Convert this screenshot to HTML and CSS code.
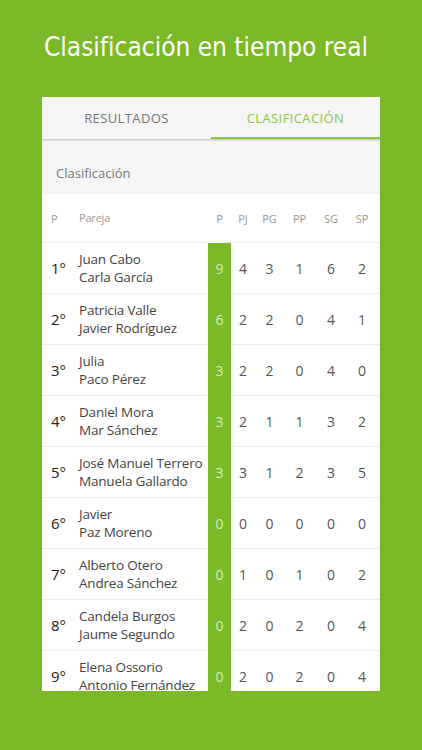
FILE: index.html
```html
<!DOCTYPE html>
<html lang="es">

<head>
    <meta charset="UTF-8">
    <meta name="viewport" content="width=device-width, initial-scale=1.0">
    <title>Clasificación en tiempo real</title>
    <link rel="stylesheet" href="styles.css">
</head>

<body>
    <header class="hero">
        <h1>Clasificación en tiempo real</h1>
    </header>

    <main class="card">
        <nav class="tabs">
            <div class="tab">RESULTADOS</div>
            <div class="tab active">CLASIFICACIÓN</div>
        </nav>

        <div class="section-title">Clasificación</div>

        <div class="table">
            <div class="row head">
                <span class="pos">P</span>
                <span class="name">Pareja</span>
                <span class="pts">P</span>
                <span class="num">PJ</span>
                <span class="num">PG</span>
                <span class="num">PP</span>
                <span class="num">SG</span>
                <span class="num">SP</span>
                <span></span>
            </div>
            <div class="row">
                <span class="pos">1°</span>
                <span class="name">Juan Cabo<br>Carla García</span>
                <span class="pts">9</span>
                <span class="num">4</span>
                <span class="num">3</span>
                <span class="num">1</span>
                <span class="num">6</span>
                <span class="num">2</span>
                <span></span>
            </div>
            <div class="row">
                <span class="pos">2°</span>
                <span class="name">Patricia Valle<br>Javier Rodríguez</span>
                <span class="pts">6</span>
                <span class="num">2</span>
                <span class="num">2</span>
                <span class="num">0</span>
                <span class="num">4</span>
                <span class="num">1</span>
                <span></span>
            </div>
            <div class="row">
                <span class="pos">3°</span>
                <span class="name">Julia<br>Paco Pérez</span>
                <span class="pts">3</span>
                <span class="num">2</span>
                <span class="num">2</span>
                <span class="num">0</span>
                <span class="num">4</span>
                <span class="num">0</span>
                <span></span>
            </div>
            <div class="row">
                <span class="pos">4°</span>
                <span class="name">Daniel Mora<br>Mar Sánchez</span>
                <span class="pts">3</span>
                <span class="num">2</span>
                <span class="num">1</span>
                <span class="num">1</span>
                <span class="num">3</span>
                <span class="num">2</span>
                <span></span>
            </div>
            <div class="row">
                <span class="pos">5°</span>
                <span class="name">José Manuel Terrero<br>Manuela Gallardo</span>
                <span class="pts">3</span>
                <span class="num">3</span>
                <span class="num">1</span>
                <span class="num">2</span>
                <span class="num">3</span>
                <span class="num">5</span>
                <span></span>
            </div>
            <div class="row">
                <span class="pos">6°</span>
                <span class="name">Javier<br>Paz Moreno</span>
                <span class="pts">0</span>
                <span class="num">0</span>
                <span class="num">0</span>
                <span class="num">0</span>
                <span class="num">0</span>
                <span class="num">0</span>
                <span></span>
            </div>
            <div class="row">
                <span class="pos">7°</span>
                <span class="name">Alberto Otero<br>Andrea Sánchez</span>
                <span class="pts">0</span>
                <span class="num">1</span>
                <span class="num">0</span>
                <span class="num">1</span>
                <span class="num">0</span>
                <span class="num">2</span>
                <span></span>
            </div>
            <div class="row">
                <span class="pos">8°</span>
                <span class="name">Candela Burgos<br>Jaume Segundo</span>
                <span class="pts">0</span>
                <span class="num">2</span>
                <span class="num">0</span>
                <span class="num">2</span>
                <span class="num">0</span>
                <span class="num">4</span>
                <span></span>
            </div>
            <div class="row">
                <span class="pos">9°</span>
                <span class="name">Elena Ossorio<br>Antonio Fernández</span>
                <span class="pts">0</span>
                <span class="num">2</span>
                <span class="num">0</span>
                <span class="num">2</span>
                <span class="num">0</span>
                <span class="num">4</span>
                <span></span>
            </div>
        </div>
    </main>
</body>

</html>
```

FILE: styles.css
```css
/* General styling */
* {
    margin: 0;
    padding: 0;
    box-sizing: border-box;
}

body {
    height: 750px;
    overflow: hidden;
    background-color: #7bb929;
    font-family: "Open Sans", "Noto Sans", sans-serif;
}

/* Title */
.hero {
    height: 97px;
    padding: 31px 0 0 44px;
}

.hero h1 {
    font-family: "DejaVu Sans Condensed", "DejaVu Sans", sans-serif;
    font-stretch: condensed;
    font-weight: normal;
    font-size: 26px;
    line-height: 32px;
    color: #fff;
}

/* Card */
.card {
    margin-left: 42px;
    width: 338px;
    height: 594px;
    overflow: hidden;
    background-color: #fff;
}

.tabs {
    display: flex;
    height: 42px;
    background-color: #f5f5f5;
    box-shadow: 0 1px 2px rgba(0, 0, 0, 0.25);
    position: relative;
}

.tab {
    flex: 1;
    display: flex;
    align-items: center;
    justify-content: center;
    padding-top: 1px;
    font-size: 13px;
    letter-spacing: 0.4px;
    color: #777;
    border-bottom: 2px solid transparent;
}

.tab.active {
    color: #8cc63f;
    border-bottom-color: #8cc63f;
}

.section-title {
    display: flex;
    align-items: center;
    height: 55px;
    padding: 12px 0 0 14px;
    background-color: #f5f5f5;
    font-size: 13px;
    color: #777;
}

/* Table */
.row {
    display: grid;
    grid-template-columns: 37px 129px 23px 24px 29px 31px 32px 30px 3px;
    height: 51px;
}

.row span {
    display: flex;
    align-items: center;
    border-bottom: 1px solid #eee;
}

.row .pos {
    padding-left: 9px;
    font-size: 15px;
    color: #222;
}

.row .name {
    white-space: nowrap;
    font-size: 13.5px;
    letter-spacing: -0.2px;
    line-height: 18px;
    color: #444;
}

.row .pts {
    justify-content: center;
    background-color: #7bb929;
    border-bottom-color: #7bb929;
    font-size: 14px;
    color: #d8edba;
}

.row .num {
    justify-content: center;
    font-size: 14px;
    color: #555;
}

.row.head {
    height: 49px;
}

.row.head span {
    font-size: 11px;
    color: #999;
}

.row.head .pts {
    background-color: #fff;
    border-bottom-color: #eee;
    color: #999;
}
```
